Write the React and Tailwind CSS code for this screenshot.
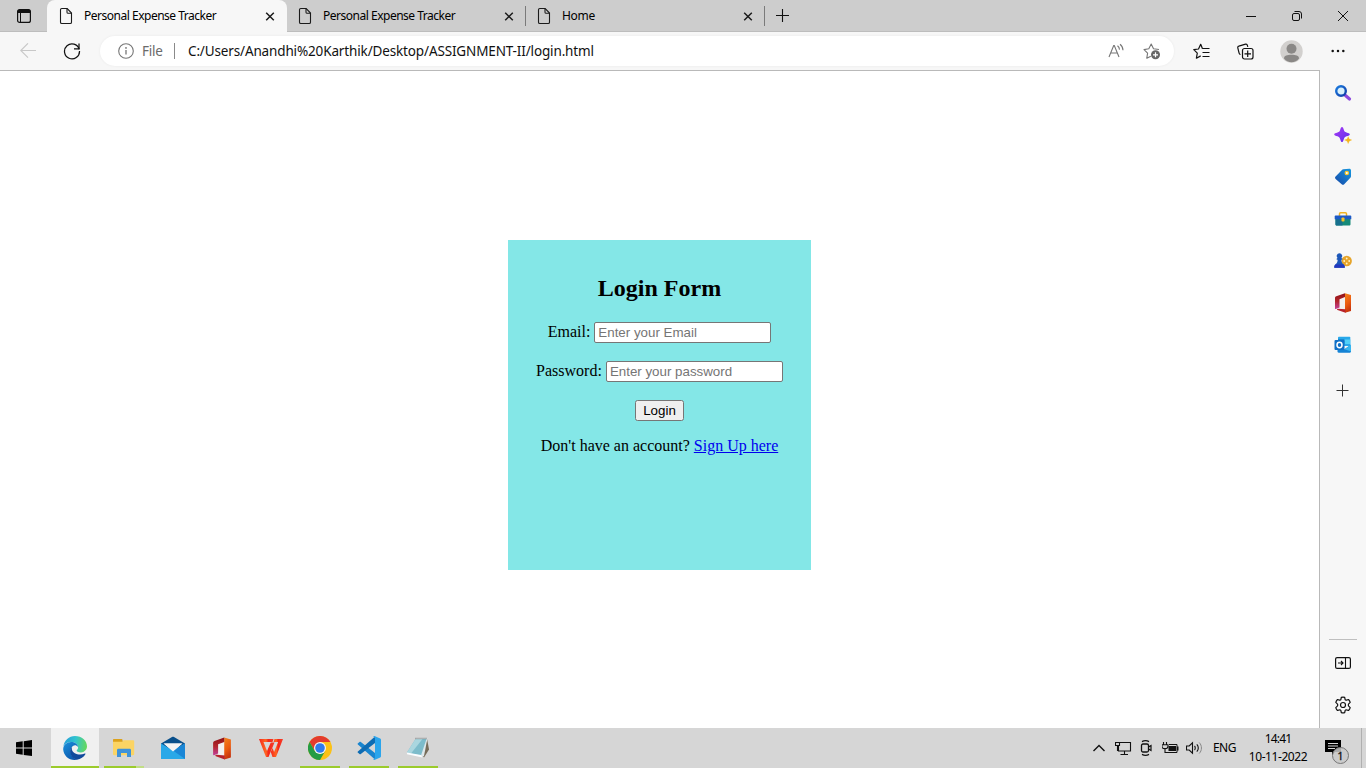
import React from "react";

function Icon({ w = 16, h = 16, className = "", children }) {
  return (
    <svg width={w} height={h} viewBox={`0 0 ${w} ${h}`} fill="none" className={`block shrink-0 ${className}`}>
      {children}
    </svg>
  );
}

/* ---------- browser chrome ---------- */

const PageIcon = () => (
  <Icon w={14} h={18}>
    <path d="M2.800 1.500h5.400L12.500 6v9.200c0 .8-.5 1.300-1.300 1.300H2.800c-.8 0-1.300-.5-1.300-1.300V2.800c0-.8.5-1.300 1.300-1.300z" stroke="#1b1b1b" strokeWidth="1.1" />
    <path d="M8 1.800v3.400c0 .7.400 1.100 1.100 1.100h3.200" stroke="#1b1b1b" strokeWidth="1.1" />
  </Icon>
);

const CloseIcon = () => (
  <Icon w={10} h={10}>
    <path d="M1.200 1.700l7.600 7.600M8.800 1.700L1.200 9.300" stroke="#1b1b1b" strokeWidth="1.5" />
  </Icon>
);

function Tab({ title, active }) {
  return (
    <div className={`flex h-8 shrink-0 items-center ${active ? "w-[240px] rounded-t-lg bg-[#f7f7f7] pl-[12px]" : "w-[239px] border-b border-[#bdbdbd] pl-[11px]"}`}>
      <PageIcon />
      <span className={`ml-[11px] grow whitespace-nowrap text-[12px] leading-4 text-black ${title.length > 8 ? "tracking-[-0.49px]" : "tracking-[-0.3px]"}`}>{title}</span>
      <CloseIcon />
      <span className={`ml-[11px] h-5 w-px ${active ? "" : "bg-[#7a7a7a]"}`} />
    </div>
  );
}

function TabStrip() {
  return (
    <div className="flex h-8 w-full bg-[#cdcdcd]">
      <div className="flex w-[47px] items-center justify-center border-b border-[#bdbdbd]">
        <Icon w={14} h={14}>
          <rect x="0.6" y="0.6" width="12.8" height="12.8" rx="2" stroke="#111" strokeWidth="1.2" />
          <path d="M.6 4V2.600a2 2 0 012-2h8.800a2 2 0 012 2V4z" fill="#111" />
          <path d="M3.500 4v9.400" stroke="#111" />
        </Icon>
      </div>
      <Tab title="Personal Expense Tracker" active />
      <Tab title="Personal Expense Tracker" />
      <Tab title="Home" />
      <div className="flex grow items-center border-b border-[#bdbdbd] pl-[10px]">
        <Icon w={15} h={15}>
          <path d="M7.500 1v13M1 7.500h13" stroke="#111" strokeWidth="1.1" />
        </Icon>
      </div>
      <div className="flex items-center border-b border-[#bdbdbd] pr-[17px]">
        <Icon w={12} h={12}>
          <path d="M1 6.500h10" stroke="#111" />
        </Icon>
        <Icon w={12} h={12} className="ml-[34px]">
          <rect x="1.500" y="3.500" width="7" height="7" rx="1.500" stroke="#111" />
          <path d="M3.500 1.500h4.500a2.500 2.500 0 012.500 2.500v4.500" stroke="#111" />
        </Icon>
        <Icon w={12} h={12} className="ml-[34px]">
          <path d="M1 1l10 10M11 1L1 11" stroke="#111" />
        </Icon>
      </div>
    </div>
  );
}

function Toolbar() {
  return (
    <div className="flex h-[38px] w-full items-center bg-[#f7f7f7]">
      <div className="flex w-[100px] shrink-0 items-center pl-5">
        <Icon w={16} h={16}>
          <path d="M16 7.500H1M8 .3L.8 7.500 8 14.700" stroke="#c8c8c8" strokeWidth="1.1" />
        </Icon>
        <Icon w={18} h={18} className="ml-[27px]">
          <path d="M16.200 7.200A7.500 7.500 0 1016.500 9" stroke="#111" strokeWidth="1.25" />
          <path d="M16 1.500v5.300h-5" stroke="#111" strokeWidth="1.25" />
        </Icon>
      </div>
      <div className="flex h-[30px] w-[1074px] shrink-0 items-center rounded-full bg-white pl-[18px] pr-[13px] shadow-[0_0_3px_rgba(0,0,0,0.06)]">
        <Icon w={16} h={16}>
          <circle cx="8" cy="8" r="7.300" stroke="#767676" strokeWidth="1.1" />
          <path d="M8 7v4.500" stroke="#767676" strokeWidth="1.300" />
          <circle cx="8" cy="4.900" r=".9" fill="#767676" />
        </Icon>
        <span className="ml-2 w-[32px] whitespace-nowrap text-[13.500px] leading-5 tracking-[-0.25px] text-[#6b6b6b]">File</span>
        <span className="h-4 w-px bg-[#8a8a8a]" />
        <span className="ml-[13px] grow whitespace-nowrap text-[13.500px] leading-5 tracking-[-0.14px] text-[#111]">
          C:/Users/Anandhi%20Karthik/Desktop/ASSIGNMENT-II/login.html
        </span>
        <Icon w={17} h={16}>
          <path d="M1 14L5.700 2.500h.6L11 14M2.700 10h6.600" stroke="#767676" strokeWidth="1.1" />
          <path d="M9.500 2.800c1.200.9 1.900 2.100 2 3.800M12 1.200c1.700 1.300 2.900 3.300 3 6" stroke="#767676" strokeWidth="1.1" />
        </Icon>
        <Icon w={18} h={18} className="ml-[18px]">
          <path d="M7.800 14.200l-4 2 .8-5L1 7.600l4.800-.8L8.200 2l2.300 4.700 5.500.8" stroke="#767676" strokeWidth="1.1" strokeLinejoin="round" />
          <circle cx="12.500" cy="12.800" r="4.500" fill="#666" />
          <path d="M12.500 10.300v5M10 12.800h5" stroke="#fff" strokeWidth="1.2" />
        </Icon>
      </div>
      <div className="flex grow items-center pl-[19px]">
        <Icon w={17} h={17}>
          <path d="M9.500 5.800L7.700 1.300 5.500 6 .8 6.700l3.500 3.500-.9 5 4.300-2.300M9.500 5.500h7M9.500 9.500h7M9.500 13.500h7" stroke="#111" strokeWidth="1.200" strokeLinejoin="round" />
        </Icon>
        <Icon w={17} h={17} className="ml-[27px]">
          <path d="M3.500 11.500c-.8-.2-1.200-.7-1.400-1.400L.8 4.800c-.2-.8.2-1.500 1-1.700l6.800-2c.9-.2 1.500.2 1.700 1l.5 1.700" stroke="#111" strokeWidth="1.2" />
          <rect x="5.500" y="5.500" width="10.500" height="10.500" rx="2" stroke="#111" strokeWidth="1.200" />
          <path d="M10.700 7.500v6.500M7.500 10.800h6.500" stroke="#111" strokeWidth="1.200" />
        </Icon>
        <Icon w={23} h={23} className="ml-[26px]">
          <circle cx="11.500" cy="11.500" r="11.200" fill="#d2d0ce" />
          <circle cx="11.500" cy="8.800" r="5" fill="#8a8886" />
          <path d="M4 18.500c0-3 3.300-3.700 7.500-3.700s7.500.7 7.500 3.700c-2 2.600-4.500 3.800-7.500 3.800S6 21.100 4 18.500z" fill="#8a8886" />
        </Icon>
        <Icon w={14} h={4} className="ml-[28px]">
          <circle cx="1.700" cy="2" r="1.250" fill="#111" />
          <circle cx="7" cy="2" r="1.250" fill="#111" />
          <circle cx="12.300" cy="2" r="1.250" fill="#111" />
        </Icon>
      </div>
    </div>
  );
}

/* ---------- brand marks ---------- */

function OfficeIcon({ id, className = "h-5 w-[18px]" }) {
  return (
    <svg viewBox="0 0 18 20" className={`block ${className}`}>
      <defs>
        <linearGradient id={`${id}a`} x1="0" y1="0" x2=".3" y2="1">
          <stop offset="0" stopColor="#f4831c" />
          <stop offset=".6" stopColor="#ea5a10" />
          <stop offset="1" stopColor="#c8350d" />
        </linearGradient>
        <linearGradient id={`${id}b`} x1="0" y1="0" x2="0" y2="1">
          <stop offset="0" stopColor="#8e1017" />
          <stop offset=".5" stopColor="#b3262c" />
          <stop offset="1" stopColor="#c2409a" />
        </linearGradient>
      </defs>
      <path d="M5 5.500L12 4v12.500l-7-1z" fill="#f2f0f0" />
      <path d="M11 .2L17 2v16l-6 1.800z" fill={`url(#${id}a)`} />
      <path d="M11 .2v3.900L5.500 6.200v8.300L1.800 16c-.5.200-.8 0-.8-.6V5.200c0-.9.400-1.500 1.300-1.900z" fill={`url(#${id}b)`} />
      <path d="M3.800 15.700l7.700.6v3.500L3.500 17c-.8-.3-.6-1.200.3-1.300z" fill="#b7222b" />
    </svg>
  );
}

const sideIcons = [
  <Icon w={18} h={18} key="search">
    <defs>
      <linearGradient id="lens" x1="0" y1="0" x2="1" y2="1"><stop stopColor="#1b7bdf" /><stop offset="1" stopColor="#123da8" /></linearGradient>
    </defs>
    <path d="M11.500 11.500l4 3.500" stroke="#8c48dc" strokeWidth="3.200" strokeLinecap="round" />
    <circle cx="7" cy="7" r="4.800" fill="#d8f0fb" stroke="url(#lens)" strokeWidth="2.400" />
  </Icon>,
  <Icon w={18} h={18} key="spark">
    <defs>
      <linearGradient id="spark" x1="0" y1="0" x2="1" y2="1"><stop stopColor="#a73af5" /><stop offset="1" stopColor="#5f2eea" /></linearGradient>
    </defs>
    <path d="M8 1c.9 0 1.300 1 1.900 3 .5 1.500 1.100 2 2.600 2.500 2 .6 3.300 1 3.300 1.900s-1.300 1.200-3.300 1.900c-1.500.5-2.100 1.100-2.600 2.600-.6 2.100-1 3.100-1.900 3.100s-1.300-1-1.900-3.100c-.5-1.500-1.100-2.100-2.600-2.600C1.500 9.600.2 9.300.2 8.400s1.300-1.300 3.300-1.900C5 6 5.600 5.500 6.100 4 6.700 2 7.100 1 8 1z" fill="url(#spark)" />
    <path d="M14.200 10.500c.7 0 .8 1.800 1.200 2.300.5.500 2.400.6 2.400 1.300s-1.900.8-2.400 1.300-.5 2.300-1.200 2.300-.7-1.800-1.200-2.300-2.500-.6-2.500-1.300 2-.8 2.500-1.300.5-2.300 1.200-2.300z" fill="#f5b51b" stroke="#f7f7f7" strokeWidth=".3" />
  </Icon>,
  <Icon w={18} h={18} key="tag">
    <defs>
      <linearGradient id="tag" x1="1" y1="0" x2="0" y2="1"><stop stopColor="#1698e0" /><stop offset="1" stopColor="#1748a8" /></linearGradient>
    </defs>
    <path d="M9.300 1.300l5.900-.6c1-.1 1.800.6 1.800 1.600v6c0 .6-.2 1-.6 1.400l-6.200 6.500c-.7.700-1.700.7-2.500 0L1.600 11C.8 10.200.9 9.200 1.600 8.500l6.100-6.200c.5-.6 1-.9 1.600-1z" fill="url(#tag)" />
    <circle cx="12.800" cy="5" r="1.700" fill="#f2fbff" stroke="#f5c529" strokeWidth="1.200" />
  </Icon>,
  <Icon w={18} h={18} key="tools">
    <path d="M5.500 6V3.800c0-.8.400-1.100 1.100-1.100h4.800c.7 0 1.100.3 1.100 1.100V6" stroke="#f0b323" strokeWidth="1.500" />
    <path d="M1.500 8h15v6.200c0 .9-.5 1.400-1.400 1.400H2.900c-.9 0-1.400-.5-1.400-1.400z" fill="#168a78" />
    <path d="M1.500 9h7v6.600H2.900c-.9 0-1.400-.5-1.400-1.400z" fill="#17708e" />
    <path d="M1.500 5.600h15c.5 0 .8.400.8 1v2.700H.7V6.600c0-.6.300-1 .8-1z" fill="#1c59c6" />
    <rect x="7.500" y="7.500" width="3" height="4" rx=".8" fill="#f5c12a" />
  </Icon>,
  <Icon w={18} h={18} key="games">
    <circle cx="12.700" cy="9" r="5.200" fill="#e6a42a" />
    <g fill="#fff2c9"><circle cx="10.200" cy="9" r=".9" /><circle cx="15.200" cy="9" r=".9" /><circle cx="12.700" cy="6.500" r=".9" /><circle cx="12.700" cy="11.500" r=".9" /></g>
    <path d="M5.400 1.300a2.700 2.700 0 011.900 4.700l1 .5v1.300h-1c.2 2.300.7 3.300 2.300 4.800.8.700 1.200 1.700 1.200 3.100H.3c0-1.400.3-2.400 1.100-3.100C3 11.100 3.500 10.100 3.700 7.800h-1V6.500l.9-.5a2.700 2.700 0 011.800-4.700z" fill="#1c57b9" />
    <path d="M1.400 12.600h8.200c.8.700 1.200 1.700 1.200 3.100H.3c0-1.400.3-2.400 1.100-3.100z" fill="#2337bf" />
  </Icon>,
  <OfficeIcon id="sideoffice" key="office" />,
  <Icon w={18} h={18} key="outlook">
    <path d="M4 1.500c0-.5.300-.8.800-.8h10.700c.5 0 .8.300.8.800V10H4z" fill="#28a8ea" />
    <path d="M4 3.500h6.500V8H4z" fill="#0a68b8" />
    <path d="M10.500 3.500h5.800V8h-5.800z" fill="#50d0f8" />
    <path d="M3.500 9l7 4.200L17 8.600v7c0 .7-.4 1.100-1.100 1.100H4.700c-.8 0-1.200-.4-1.200-1.100z" fill="#1583d5" />
    <path d="M10.500 13.200L17 8.600v7z" fill="#36b5ef" />
    <rect x=".5" y="4" width="10" height="10" rx="1" fill="#0f70c7" />
    <ellipse cx="5.500" cy="9" rx="2.500" ry="2.700" stroke="#fff" strokeWidth="1.500" />
  </Icon>,
];

function Sidebar() {
  return (
    <aside className="flex w-[46px] shrink-0 flex-col items-center bg-[#f7f7f7] pb-[2px] pt-[2px]">
      {sideIcons.map((icon, i) => (
        <div key={i} className="flex h-[42px] w-full items-center justify-center">{icon}</div>
      ))}
      <div className="flex h-[49px] w-full items-center justify-center pr-px">
        <Icon w={13} h={13}>
          <path d="M6.500 .5v12M.5 6.500h12" stroke="#333" />
        </Icon>
      </div>
      <div className="grow" />
      <div className="mb-[2px] h-px w-7 bg-[#bfbfbf]" />
      <div className="flex h-[42px] items-center justify-center">
        <Icon w={16} h={12}>
          <rect x=".6" y=".6" width="14.800" height="10.800" rx="1.500" stroke="#111" strokeWidth="1.200" />
          <path d="M10.500 .5v11M3 6h5M6 4l2 2-2 2" stroke="#111" strokeWidth="1.100" />
        </Icon>
      </div>
      <div className="flex h-[42px] items-center justify-center">
        <Icon w={18} h={18}>
          <path d="M7.300 1.300c1.100-.3 2.300-.3 3.400 0l.4 2c.1.600.8 1 1.400.8l2-.6c.8.800 1.400 1.800 1.700 2.900l-1.500 1.500c-.5.500-.5 1.700 0 2.200l1.500 1.500c-.3 1.100-.9 2.100-1.700 2.900l-2-.6c-.6-.2-1.300.2-1.400.8l-.4 2c-1.100.3-2.300.3-3.400 0l-.4-2c-.1-.6-.8-1-1.400-.8l-2 .6c-.8-.8-1.400-1.800-1.700-2.900l1.500-1.500c.5-.5.5-1.700 0-2.200L1.800 6.400c.3-1.100.9-2.100 1.700-2.900l2 .6c.6.200 1.300-.2 1.400-.8z" stroke="#111" strokeWidth="1.200" strokeLinejoin="round" />
          <circle cx="9" cy="9" r="2.500" stroke="#111" strokeWidth="1.200" />
        </Icon>
      </div>
    </aside>
  );
}

/* ---------- page ---------- */

const field =
  "h-[21px] w-[177px] shrink-0 rounded-[2px] border border-[#767676] bg-white px-[3px] py-0 font-['Liberation_Sans',Arial,sans-serif] text-[13.333px] leading-[15px] placeholder:text-[#757575] focus:outline-none";

function LoginForm() {
  return (
    <form
      onSubmit={(e) => e.preventDefault()}
      className="flex h-[330px] w-[303px] flex-col items-center bg-[#84e7e7] pt-[34px] font-['Liberation_Serif','Times_New_Roman',serif] text-[16px] leading-[18px] text-black"
    >
      <h2 className="text-[24px] font-bold leading-7">Login Form</h2>
      <label className="mt-5 flex h-[21px] items-center gap-1 whitespace-nowrap">
        <span className="pb-[2px]">Email:</span>
        <input type="email" placeholder="Enter your Email" className={field} />
      </label>
      <label className="mt-[18px] flex h-[21px] items-center gap-1 whitespace-nowrap">
        <span className="pb-[2px]">Password:</span>
        <input type="password" placeholder="Enter your password" className={field} />
      </label>
      <button className="mt-[18px] h-[21px] w-[49px] rounded-[2.5px] border border-[#767676] bg-[#efefef] font-['Liberation_Sans',Arial,sans-serif] text-[13.333px] leading-[19px]">
        Login
      </button>
      <p className="mt-4 whitespace-nowrap">
        Don't have an account? <a href="#" className="text-[#0000ee] underline">Sign Up here</a>
      </p>
    </form>
  );
}

/* ---------- taskbar ---------- */

const EdgeIcon = () => (
  <svg width="24" height="24" viewBox="0 0 24 24" className="block">
    <defs>
      <linearGradient id="edgeTop" x1="0" y1=".4" x2="1" y2=".5"><stop stopColor="#249dd8" /><stop offset=".5" stopColor="#32c4cf" /><stop offset="1" stopColor="#66d85b" /></linearGradient>
      <linearGradient id="edgeLow" x1="0" y1="0" x2=".7" y2="1"><stop stopColor="#1b91dc" /><stop offset="1" stopColor="#0b55ab" /></linearGradient>
    </defs>
    <path d="M.4 10.500C1.200 4.400 6 0 12 0c6.800 0 12 4.700 12 10.300 0 3.500-2.700 6.100-6.100 6.100-2.700 0-4.300-1-4.300-1.900 0-.6 1.500-1.200 1.500-3.100C15.100 8 11.800 6 8.200 6 4.200 6 1.300 8.200.4 10.500z" fill="url(#edgeTop)" />
    <path d="M.2 13.500C0 8.900 3.700 5.900 8 5.900c3.800 0 7 2 7 5.200-1.300-1.800-3.200-2.300-4.700-1.300-3 2-3.300 5.500-2 8.600 1 2.700 3.500 4.900 6 5.300C6.700 25.300.6 20 .2 13.500z" fill="url(#edgeLow)" />
    <path d="M9.200 10.700c-2.400 2.300-2.500 5-1.400 7.700 1 2.700 3.500 4.900 6.200 5.400 3.600-.4 6.800-2.600 8.500-5.700.3-.5-.2-.7-.7-.5-5.500 2.400-11.700.2-12.900-3.800-.3-1-.2-2 .3-3.100z" fill="#114a9c" />
  </svg>
);

const ExplorerIcon = () => (
  <Icon w={22} h={20}>
    <path d="M0 2c0-.8.400-1 1-1h7.500c.8 0 .9.500 1 1l.3 2H0z" fill="#dca21c" />
    <path d="M0 3.800h9.500l1-1.500H20c.8 0 1.200.4 1.200 1.200V16c0 .8-.4 1.200-1.200 1.200H1.200C.4 17.200 0 16.800 0 16z" fill="#fbd464" />
    <path d="M4 19v-6.800c0-1 .5-1.500 1.500-1.500h11c1 0 1.500.5 1.500 1.500V19h-4v-4H8v4z" fill="#3f92d8" />
  </Icon>
);

const MailIcon = () => (
  <Icon w={24} h={24}>
    <path d="M0 7.500L11 1c.7-.4 1.300-.4 2 0l11 6.500v6H0z" fill="#094f8b" />
    <path d="M3 7.500h18l-9 8z" fill="#f4f4f4" />
    <path d="M0 7.500l12 7L24 7.500V23H0z" fill="#29a8e8" />
    <path d="M12 14.500l12-7V23z" fill="#1a86d6" />
    <path d="M2.500 7.500h19l-9.500 8z" fill="#f4f4f4" />
  </Icon>
);

const WpsIcon = () => (
  <Icon w={24} h={18}>
    <defs>
      <linearGradient id="wps" x1="0" y1="0" x2="1" y2="0"><stop stopColor="#f6261c" /><stop offset=".45" stopColor="#ff6822" /><stop offset=".6" stopColor="#f3261a" /><stop offset="1" stopColor="#f8402a" /></linearGradient>
    </defs>
    <path d="M0 0h14.500l-1 3H4.500l3.500 9 3.800-8.500h3.700L9.500 18H7z" fill="url(#wps)" />
    <path d="M15.500 0H24l-7 18h-3.500L11.800 13l1.700-4 1.600 4 4-10h-4.500z" fill="url(#wps)" />
  </Icon>
);

const ChromeIcon = () => (
  <Icon w={24} h={24}>
    <circle cx="12" cy="12" r="12" fill="#fbc116" />
    <path d="M12 6h10.400A12 12 0 001.600 6l5.200 9z" fill="#e33b2e" />
    <path d="M1.600 6A12 12 0 0012 24l5.200-9L12 18l-5.200-3z" fill="#249c45" />
    <circle cx="12" cy="12" r="6" fill="#f6f6f6" />
    <circle cx="12" cy="12" r="4.800" fill="#2f7bed" />
  </Icon>
);

const CodeIcon = () => (
  <Icon w={24} h={24}>
    <path d="M1 7.200l1.500-1.300c.4-.3.900-.3 1.300 0L18 17v6.500L.9 8.400c-.4-.4-.4-.9.100-1.200z" fill="#1985cf" />
    <path d="M1 16.800l1.500 1.300c.4.300.9.300 1.300 0L18 7V.5L.9 15.600c-.4.400-.4.900.1 1.200z" fill="#0e6cb3" />
    <path d="M18 .2l5.200 2.300c.5.200.8.700.8 1.200v16.600c0 .5-.3 1-.8 1.200L18 23.800c-.8.300-1.300 0-1.800-.5L18 22V2L16.200.7c.5-.5 1-.8 1.800-.5z" fill="#2ba5ec" />
  </Icon>
);

const NotepadIcon = () => (
  <Icon w={24} h={24}>
    <path d="M21 2.500l2 11-5 8-1.500-2z" fill="#776c59" />
    <path d="M10 2h11.500l-3.500 18-3 1z" fill="#dfe9ec" />
    <path d="M9.500 3h11l-5.500 16.500L.8 16.800z" fill="#7dbccb" />
    <path d="M9.500 3h7L5 17.500.8 16.800z" fill="#aad6df" />
    <path d="M.8 16.500L15 19l1.500 2.500L1 18.200z" fill="#fafdff" />
    <path d="M9.500 2.500h12" stroke="#777" strokeDasharray="1 1" strokeWidth="1.300" />
  </Icon>
);

const TaskTile = ({ children, active, bar, split }) => (
  <div className="flex w-[49px] flex-col items-center">
    <div className={`flex h-[38px] w-12 items-center justify-center pt-[2px] ${active ? "bg-[#f0f0f0]" : ""}`}>{children}</div>
    {active && <div className="h-[2px] w-12 bg-[#9bcb2c]" />}
    {bar && <div className="h-[2px] w-10 bg-[#9bcb2c]" />}
    {split && (
      <div className="flex h-[2px] w-10">
        <div className="w-8 bg-[#9bcb2c]" />
        <div className="w-2 bg-[#c1de84]" />
      </div>
    )}
  </div>
);

function Taskbar() {
  return (
    <div className="flex h-10 w-full bg-[#d6d6d6]">
      <div className="flex w-[50px] items-center pl-4">
        <Icon w={16} h={16}>
          <path d="M0 2.300L6.700 1.300v6.200H0zM7.700 1.200L16 0v7.500H7.700zM0 8.500h6.700v6.300L0 13.800zM7.700 8.500H16V16l-8.300-1.100z" fill="#000" />
        </Icon>
      </div>
      <TaskTile active><EdgeIcon /></TaskTile>
      <TaskTile split><ExplorerIcon /></TaskTile>
      <TaskTile><MailIcon /></TaskTile>
      <TaskTile><OfficeIcon id="taskoffice" className="h-[23px] w-[20px]" /></TaskTile>
      <TaskTile><WpsIcon /></TaskTile>
      <TaskTile bar><ChromeIcon /></TaskTile>
      <TaskTile bar><CodeIcon /></TaskTile>
      <TaskTile bar><NotepadIcon /></TaskTile>
      <div className="grow" />
      <div className="flex items-center">
        <Icon w={12} h={8}>
          <path d="M.5 7L6 1.500 11.500 7" stroke="#111" strokeWidth="1.400" />
        </Icon>
        <Icon w={17} h={16} className="ml-[10px]">
          <path d="M5 2.500h10.500v8.500H3.500V6M9.500 11v3M5.500 14.500h7.500" stroke="#111" strokeWidth="1.1" />
          <path d="M.5 2.500h4v3h-4zM2.500 5.500V11" stroke="#111" strokeWidth="1.1" />
        </Icon>
        <Icon w={12} h={16} className="ml-[8px]">
          <rect x="1.500" y="4" width="7" height="8" rx="1.500" stroke="#111" strokeWidth="1.300" />
          <path d="M8.500 7l2.500-1.500v5L8.500 9M2 1.600C4 .5 7 .5 9 1.600M2 14.400c2 1.100 5 1.100 7 0" stroke="#111" strokeWidth="1.200" />
        </Icon>
        <Icon w={17} h={16} className="ml-[10px]">
          <path d="M1.500 2v2.500M4.500 2v2.500M0 4.800h6v1.400C6 8 5 8.700 3 8.700S0 8 0 6.200zM3 8v4.500h2.500" stroke="#111" strokeWidth="1.100" />
          <path d="M7 4.500h8v8H5" stroke="#111" />
          <path d="M6.500 6H14v5H6.500z" fill="#111" />
          <path d="M15 6.500h1.500v4H15z" fill="#111" />
        </Icon>
        <Icon w={17} h={14} className="ml-[7px]">
          <path d="M.5 5h2.700L6.500 1.800v10.400L3.200 9H.5z" stroke="#111" strokeWidth="1.100" />
          <path d="M8.500 5c1 1 1 3 0 4M10.800 3.300c2 2 2 5.400 0 7.400" stroke="#111" strokeWidth="1.100" />
          <path d="M13.200 1.500c3 3 3 8 0 11" stroke="#888" />
        </Icon>
        <span className="ml-[10px] w-[30px] text-[12px] leading-4 tracking-[-0.55px] text-black">ENG</span>
        <div className="flex w-[70px] flex-col items-center whitespace-nowrap text-[12px] leading-[18px] text-black">
          <span className="tracking-[-0.85px]">14:41</span>
          <span className="tracking-[-0.42px]">10-11-2022</span>
        </div>
        <Icon w={26} h={28} className="ml-[12px] mt-[3px]">
          <path d="M0 4h16v12h-6l-3 3.500V16H0z" fill="#000" />
          <path d="M3 7.500h10M3 10h10M3 12.500h7" stroke="#d6d6d6" />
          <circle cx="15.500" cy="19.500" r="8" fill="#c9c9c9" fillOpacity=".85" stroke="#777" strokeWidth="1" />
          <text x="15.500" y="23.500" textAnchor="middle" fontSize="11" fill="#111" stroke="#111" strokeWidth=".3">1</text>
        </Icon>
        <div className="ml-[10px] mr-[4px] h-10 w-px bg-[#b0b0b0]" />
      </div>
    </div>
  );
}

export default function App() {
  return (
    <div className="flex h-[768px] w-[1366px] flex-col overflow-hidden bg-white font-['Noto_Sans','Open_Sans',sans-serif]">
      <TabStrip />
      <Toolbar />
      <div className="flex min-h-0 grow bg-[#f7f7f7]">
        <main className="flex grow justify-center border-r border-t border-[#b9b9b9] bg-white pt-[169px]">
          <LoginForm />
        </main>
        <Sidebar />
      </div>
      <Taskbar />
    </div>
  );
}
